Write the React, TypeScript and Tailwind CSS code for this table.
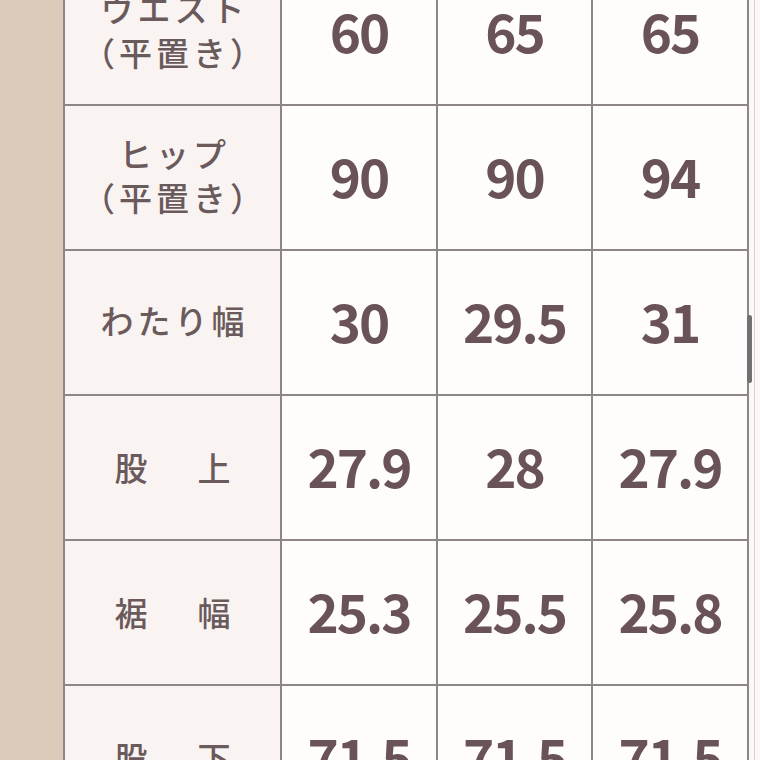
const rows: { label: string[]; spaced?: boolean; values: string[] }[] = [
  { label: ["ウエスト", "（平置き）"], values: ["60", "65", "65"] },
  { label: ["ヒップ", "（平置き）"], values: ["90", "90", "94"] },
  { label: ["わたり幅"], values: ["30", "29.5", "31"] },
  { label: ["股", "上"], spaced: true, values: ["27.9", "28", "27.9"] },
  { label: ["裾", "幅"], spaced: true, values: ["25.3", "25.5", "25.8"] },
  { label: ["股", "下"], spaced: true, values: ["71.5", "71.5", "71.5"] },
]

function Label({ row }: { row: (typeof rows)[number] }) {
  if (row.spaced) {
    return (
      <div className="flex items-center justify-center gap-[50px] bg-[#f9f4f2] text-[33px] font-medium text-[#6b5a5c]">
        <span>{row.label[0]}</span>
        <span>{row.label[1]}</span>
      </div>
    )
  }
  return (
    <div className="flex flex-col items-center justify-center bg-[#f9f4f2] pb-[6px] text-[33px] font-medium leading-[44px] tracking-[0.12em] text-[#6b5a5c]">
      {row.label.map((line) => (
        <span key={line} className="pl-[0.12em]">
          {line}
        </span>
      ))}
    </div>
  )
}

export default function App() {
  return (
    <div
      className="relative flex h-[760px] w-[760px] overflow-hidden bg-[#fbf8f6]"
      style={{ fontFamily: '"Noto Sans CJK JP", "Noto Sans", sans-serif' }}
    >
      <div className="w-[63px] shrink-0 bg-[#dccaba]" />

      <div className="mt-[-41px] grid h-fit shrink-0 grid-cols-[215px_154px_153px_154px] auto-rows-[143px] gap-[2px] bg-[#8d8685] p-[2px]">
        {rows.map((row) => (
          <div key={row.values.join() + row.label.join()} className="contents">
            <Label row={row} />
            {row.values.map((v, i) => (
              <div
                key={i}
                className="flex items-center justify-center bg-[#fefdfc] pb-[4px] text-[53px] font-semibold tracking-[-2px] text-[#6a5357]"
              >
                {v}
              </div>
            ))}
          </div>
        ))}
      </div>

      <div className="ml-[5px] w-px bg-[#d6d0ce]" />

      <div className="absolute left-[747px] top-[315px] h-[68px] w-[5px] rounded-full bg-[#707070]" />
    </div>
  )
}
